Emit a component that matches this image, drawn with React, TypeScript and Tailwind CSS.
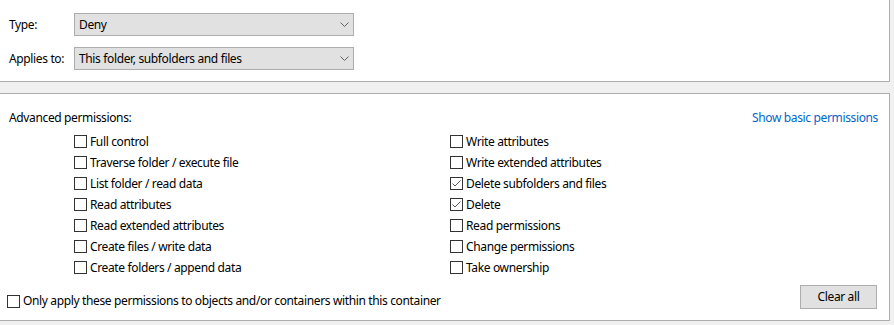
import React from 'react';

const left = [
    'Full control',
    'Traverse folder / execute file',
    'List folder / read data',
    'Read attributes',
    'Read extended attributes',
    'Create files / write data',
    'Create folders / append data',
];

const right = [
    { label: 'Write attributes', checked: false },
    { label: 'Write extended attributes', checked: false },
    { label: 'Delete subfolders and files', checked: true },
    { label: 'Delete', checked: true },
    { label: 'Read permissions', checked: false },
    { label: 'Change permissions', checked: false },
    { label: 'Take ownership', checked: false },
];

const Box: React.FC<{ checked?: boolean }> = ({ checked }) => (
    <span className="w-[13px] h-[13px] border border-[#333333] bg-white flex items-center justify-center shrink-0">
        {checked && (
            <svg width="11" height="11" viewBox="0 0 11 11">
                <polyline points="1.5,5.5 4,8 9.5,2.5" fill="none" stroke="#5a5a5a" strokeWidth="1" />
            </svg>
        )}
    </span>
);

const Check: React.FC<{ label: string; checked?: boolean }> = ({ label, checked }) => (
    <div className="flex items-center gap-[3px] h-[21px]">
        <Box checked={checked} />
        <span className="leading-[16px]">{label}</span>
    </div>
);

const Select: React.FC<{ value: string }> = ({ value }) => (
    <div className="w-[280px] h-[23px] border border-[#adadad] bg-[#e1e1e1] flex items-center justify-between pl-[4px] pr-[4px]">
        <span>{value}</span>
        <svg width="9" height="5" viewBox="0 0 9 5">
            <polyline points="0.5,0.5 4.5,4.5 8.5,0.5" fill="none" stroke="#606060" strokeWidth="1" />
        </svg>
    </div>
);

const App: React.FC = () => {
    return (
        <div
            className="w-[894px] h-[325px] bg-[#f0f0f0] text-[12px] tracking-[-0.36px] text-black overflow-hidden"
            style={{ fontFamily: '"Noto Sans", "Open Sans", sans-serif' }}
        >
            <div className="w-[890px] h-[82px] bg-white border-r border-b border-[#adadad] pt-[13px] pl-[9px] flex flex-col gap-[11px]">
                <div className="flex items-center">
                    <span className="w-[65px]">Type:</span>
                    <Select value="Deny" />
                </div>
                <div className="flex items-center">
                    <span className="w-[65px]">Applies to:</span>
                    <Select value="This folder, subfolders and files" />
                </div>
            </div>

            <div className="mt-[11px] w-[890px] h-[228px] bg-white border-t border-r border-b border-[#adadad] flex flex-col">
                <div className="flex justify-between items-center h-[16px] mt-[16px] pl-[9px] pr-[11px]">
                    <span>Advanced permissions:</span>
                    <span className="text-[#0066cc]">Show basic permissions</span>
                </div>
                <div className="grid grid-cols-[376px_1fr] pl-[74px] mt-[5px]">
                    <div className="flex flex-col">
                        {left.map((l) => (
                            <Check key={l} label={l} />
                        ))}
                    </div>
                    <div className="flex flex-col">
                        {right.map((r) => (
                            <Check key={r.label} label={r.label} checked={r.checked} />
                        ))}
                    </div>
                </div>
                <div className="flex justify-between items-end pl-[7px] pr-[12px] mt-[7px]">
                    <div className="flex items-center gap-[3px] h-[16px]">
                        <Box />
                        <span className="leading-[16px]">
                            Only apply these permissions to objects and/or containers within this container
                        </span>
                    </div>
                    <button className="w-[77px] h-[24px] border border-[#adadad] bg-[#e1e1e1]">Clear all</button>
                </div>
            </div>
        </div>
    );
};

export default App;
